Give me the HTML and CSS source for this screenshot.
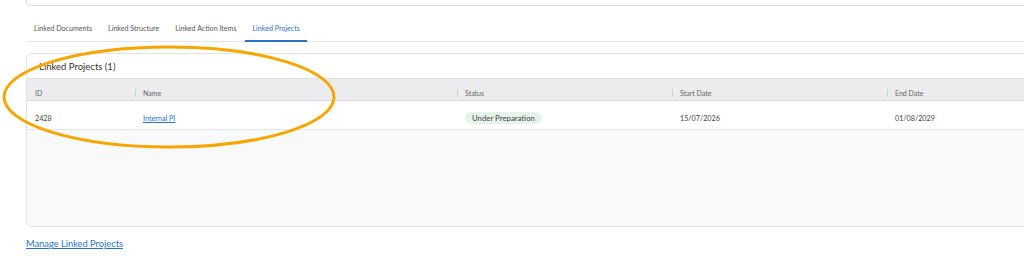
FILE: index.html
```html
<!DOCTYPE html>
<html>
<head>
<meta charset="utf-8">
<link rel="stylesheet" href="styles.css">
</head>
<body>
<div class="page">
  <div class="top-box"></div>
  <nav class="tabs">
    <span class="tab">Linked Documents</span>
    <span class="tab">Linked Structure</span>
    <span class="tab">Linked Action Items</span>
    <span class="tab active">Linked Projects</span>
  </nav>
  <section class="card">
    <h2 class="card-title">Linked Projects (1)</h2>
    <div class="grid head">
      <div class="cell">ID</div>
      <div class="cell sep">Name</div>
      <div class="cell sep">Status</div>
      <div class="cell sep">Start Date</div>
      <div class="cell sep">End Date</div>
    </div>
    <div class="grid row">
      <div class="cell">2428</div>
      <div class="cell"><a class="link" href="#">Internal PI</a></div>
      <div class="cell"><span class="badge">Under Preparation</span></div>
      <div class="cell">15/07/2026</div>
      <div class="cell">01/08/2029</div>
    </div>
    <div class="empty"></div>
  </section>
  <a class="manage" href="#">Manage Linked Projects</a>
  <svg class="highlight" width="340" height="110" viewBox="0 0 340 110">
    <ellipse cx="169" cy="52" rx="165" ry="50" fill="none" stroke="#f7a600" stroke-width="3"/>
  </svg>
</div>
</body>
</html>
```
FILE: styles.css
```css
* { box-sizing: border-box; }
html, body { margin: 0; padding: 0; background: #fff; }
body {
  font-family: Lato, "Open Sans", "Liberation Sans", sans-serif;
  color: #3a3a3a;
  overflow: hidden;
}
.page {
  position: relative;
  width: 1024px;
  height: 258px;
  padding-left: 26px;
}
.top-box {
  width: 1010px;
  height: 6px;
  border: 1px solid #dcdcdc;
  border-top: none;
  border-radius: 0 0 0 4px;
}
.tabs {
  display: flex;
  margin-top: 16px;
  padding-left: 8px;
  gap: 16px;
  border-bottom: 1px solid #e6e6e6;
  width: 1000px;
}
.tab {
  font-size: 7.1px;
  color: #555;
  padding: 1px 0 6px;
  line-height: 11px;
  border-bottom: 2px solid transparent;
  margin-bottom: -1px;
}
.tab.active {
  color: #2a72c4;
  border-bottom-color: #2a72c4;
  padding-left: 7px;
  padding-right: 7px;
  margin-left: -7px;
}
.card {
  margin-top: 11px;
  width: 1010px;
  border: 1px solid #e3e3e3;
  border-radius: 5px;
  overflow: hidden;
  background: #fff;
}
.card-title {
  margin: 0;
  font-size: 9.5px;
  font-weight: 400;
  color: #333;
  height: 24px;
  line-height: 24px;
  padding-left: 12px;
  padding-top: 1px;
}
.grid {
  display: grid;
  grid-template-columns: 108px 322px 215px 215px 215px;
  align-items: end;
}
.head {
  background: #ececee;
  height: 23px;
  padding-bottom: 2px;
  border-top: 1px solid #e0e0e2;
  border-bottom: 1px solid #d9d9dc;
  font-size: 7px;
  color: #666;
}
.cell {
  padding-left: 8px;
  position: relative;
  white-space: nowrap;
}
.head .cell { line-height: 10px; }
.head .sep::before {
  content: "";
  position: absolute;
  left: 0;
  top: 1px;
  width: 1px;
  height: 8px;
  background: #cfcfd3;
}
.row {
  height: 29px;
  padding-bottom: 5px;
  border-bottom: 1px solid #e4e4e6;
  font-size: 7.2px;
  color: #444;
}
.row .cell { line-height: 10px; }
.link {
  color: #2a72c4;
  text-decoration: underline;
}
.badge {
  display: inline-block;
  background: #e5f3ea;
  color: #444;
  font-size: 7.8px;
  line-height: 12px;
  padding: 0 7px;
  border-radius: 6px;
}
.empty {
  height: 96px;
  background: #f8f9fa;
}
.manage {
  display: inline-block;
  margin-top: 11px;
  font-size: 9.3px;
  color: #2a72c4;
  text-decoration: underline;
}
.highlight {
  position: absolute;
  left: 0;
  top: 45px;
}
```
